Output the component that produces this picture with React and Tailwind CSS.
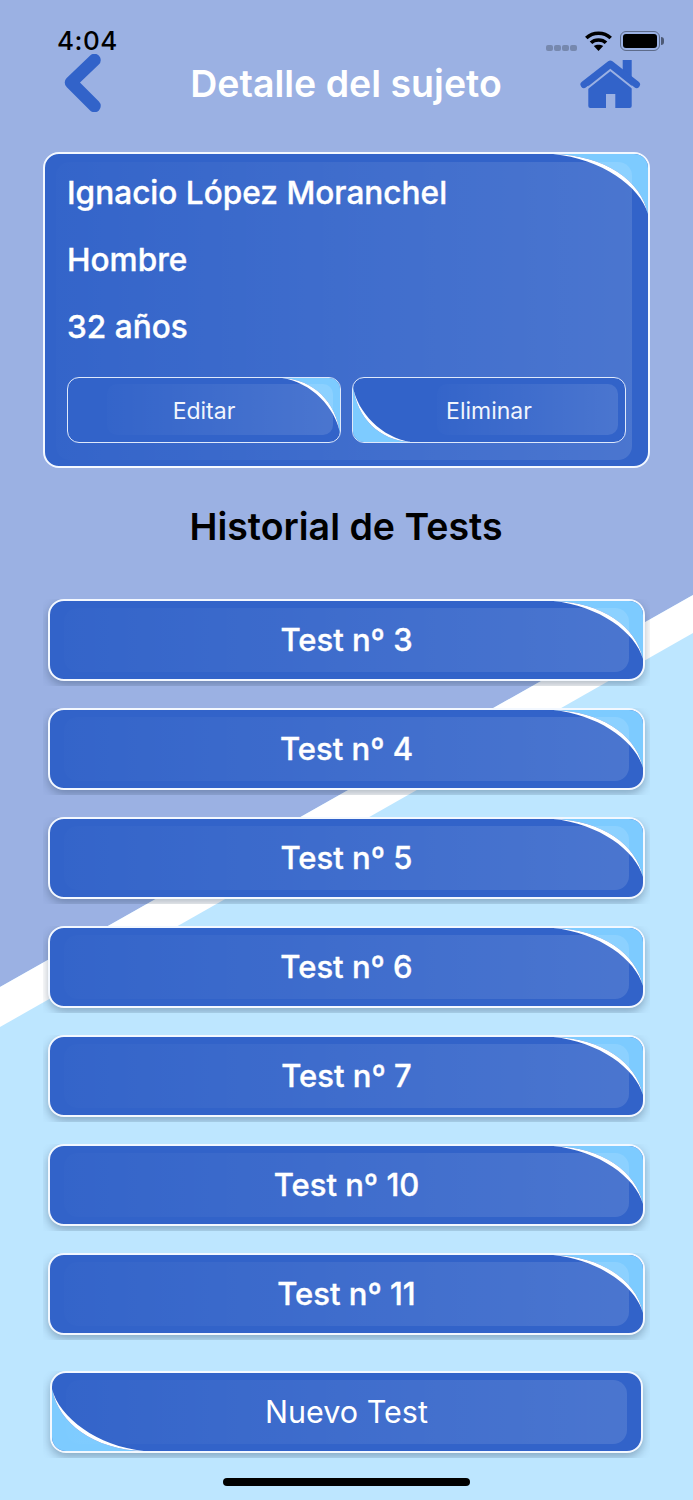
import React from 'react';

const tests = [3, 4, 5, 6, 7, 10, 11];

// curved corner in light blue with the white crescent along its edge
const Corner = ({ className }) => (
  <svg viewBox="0 0 100 100" preserveAspectRatio="none" className={`absolute ${className}`}>
    <path d="M0 0 C55 2 93 45 100 100 L100 0 Z" fill="#7DCBFF" />
    <path d="M0 0 C55 2 93 45 100 100 C92 54 51 8 0 0 Z" fill="#ffffff" />
  </svg>
);

const Glow = ({ className }) => (
  <div className={`absolute bg-gradient-to-r from-white/1 to-white/12 ${className}`} />
);

const TestButton = ({ label, isNew }) => (
  <div className={`w-[607px] h-[87px] mx-auto overflow-hidden ${isNew ? 'px-[7px]' : 'px-[5px]'}`}>
    <button className="relative w-full h-[82px] overflow-hidden rounded-[16px] border-2 border-[#f3f8ff] bg-[#3263C9] shadow-[0_4px_10px_rgba(40,60,90,0.36)]">
      {isNew ? (
        <Corner className="left-0 bottom-0 w-[92px] h-[62px] rotate-180" />
      ) : (
        <Corner className="right-0 top-0 w-[90px] h-[58px]" />
      )}
      <Glow className="left-[14px] right-[14px] top-[7px] bottom-[7px] rounded-[14px]" />
      <span className={`relative text-white ${isNew ? 'text-[30.5px] font-normal' : 'text-[31px] font-medium [-webkit-text-stroke:0.35px_white]'}`}>{label}</span>
    </button>
  </div>
);

const SmallButton = ({ label, flip }) => (
  <button className="relative flex-1 h-[66px] overflow-hidden rounded-[12px] border border-[#dfe9fb] bg-[#3263C9]">
    {flip ? (
      <Corner className="left-0 bottom-0 w-[58px] h-[55px] rotate-180" />
    ) : (
      <Corner className="right-0 top-0 w-[58px] h-[55px]" />
    )}
    <Glow
      className={`top-[6px] bottom-[7px] right-[7px] rounded-[10px] ${flip ? 'left-[84px]' : 'left-[39px]'}`}
    />
    <span className="relative top-[1px] text-[23px] text-[#f1f5fd]">{label}</span>
  </button>
);

const StatusBar = () => (
  <div className="absolute left-0 right-0 top-[25px] h-[32px] z-10 flex items-center pl-[57px] pr-[29px] text-black">
    <span className="text-[26px] leading-[32px] font-medium tracking-[0.5px]">4:04</span>
    <div className="ml-auto flex items-center">
      <div className="flex gap-[1px] mt-[13px]">
        <span className="w-[7px] h-[6px] rounded-[2px] bg-[#7688AE]" />
        <span className="w-[7px] h-[6px] rounded-[2px] bg-[#7688AE]" />
        <span className="w-[7px] h-[6px] rounded-[2px] bg-[#7688AE]" />
        <span className="w-[7px] h-[6px] rounded-[2px] bg-[#7688AE]" />
      </div>
      <svg viewBox="0 0 27 20" className="w-[27px] h-[20px] ml-[8px]" fill="none" stroke="#000" strokeWidth="3.6">
        <path d="M1.3 7 C8 0.6 19 0.6 25.7 7" />
        <path d="M6 11.8 C9.8 8 17.2 8 21 11.8" />
        <path d="M13.5 20 L8.8 15 C11.3 13.2 15.7 13.2 18.2 15 Z" fill="#000" stroke="none" />
      </svg>
      <div className="ml-[8px] flex items-center">
        <div className="w-[40px] h-[20px] rounded-[6px] border-[1.5px] border-[#5d6b8a] p-[2px]">
          <div className="w-full h-full rounded-[3px] bg-black" />
        </div>
        <div className="ml-[1px] w-[3px] h-[8px] rounded-r-[3px] bg-[#4d5a76]" />
      </div>
    </div>
  </div>
);

const App = () => {
  return (
    <div className="relative w-[693px] h-[1500px] overflow-hidden bg-[#BDE6FF] font-[Inter,sans-serif]">
      {/* diagonal background */}
      <svg viewBox="0 0 693 1500" className="absolute inset-0 w-[693px] h-[1500px]">
        <polygon points="0,0 693,0 693,595 0,987" fill="#9BB1E3" />
        <polygon points="0,987 693,595 693,633 0,1027" fill="#ffffff" />
      </svg>

      <StatusBar />

      <div className="relative flex flex-col">
        <header className="mt-[52px] h-[58px] px-[52px] grid grid-cols-[1fr_auto_1fr] items-center">
          <svg viewBox="0 0 38 58" className="w-[38px] h-[58px] ml-[12px]" fill="none" stroke="#3263C9" strokeWidth="12.5" strokeLinecap="round" strokeLinejoin="round">
            <path d="M30.5 6 L7 28.5 L30.5 52" />
          </svg>
          <h1 className="pt-[3px] -ml-[1px] text-[37.5px] font-semibold text-white leading-[58px]">Detalle del sujeto</h1>
          <svg viewBox="0 0 61 48" className="w-[61px] h-[48px] justify-self-end mt-[2px]">
            <path d="M42.7 0 H51.7 V20 H42.7 Z" fill="#3263C9" />
            <path d="M4 24.5 L30.3 4 L56.5 24.5" fill="none" stroke="#3263C9" strokeWidth="7" strokeLinecap="round" strokeLinejoin="round" />
            <path
              d="M8.3 24 L30.3 7 L51.7 24 V46 Q51.7 48 49.7 48 H35.3 V34 H26 V48 H10.3 Q8.3 48 8.3 46 Z"
              fill="#3263C9"
            />
            <path d="M7 28.5 L30.3 10 L53.5 28.5" fill="none" stroke="#9BB1E3" strokeWidth="2" />
          </svg>
        </header>

        <section className="relative mt-[42px] mx-[43px] h-[316px] overflow-hidden rounded-[16px] border-2 border-[#f3f8ff] bg-[#3263C9]">
          <Corner className="right-0 top-0 w-[95px] h-[60px]" />
          <Glow className="left-[11px] right-[16px] top-[8px] bottom-[6px] rounded-[14px]" />
          <div className="relative pt-[5px] pl-[22px] pr-[22px]">
            <p className="text-[31.6px] leading-[67px] font-medium text-white [-webkit-text-stroke:0.35px_white]">Ignacio López Moranchel</p>
            <p className="text-[31.6px] leading-[67px] font-medium text-white [-webkit-text-stroke:0.35px_white]">Hombre</p>
            <p className="text-[31.6px] leading-[67px] font-medium text-white [-webkit-text-stroke:0.35px_white]">32 años</p>
            <div className="mt-[17px] flex gap-[11px]">
              <SmallButton label="Editar" />
              <SmallButton label="Eliminar" flip />
            </div>
          </div>
        </section>

        <h2 className="mt-[31px] h-[56px] -ml-[1px] text-center text-[37.5px] leading-[56px] font-semibold text-black">
          Historial de Tests
        </h2>

        <div className="mt-[44px] flex flex-col gap-[22px]">
          {tests.map((n) => (
            <TestButton key={n} label={`Test nº ${n}`} />
          ))}
        </div>

        <div className="mt-[31px]">
          <TestButton label="Nuevo Test" isNew />
        </div>

        <div className="mt-[20px] mx-auto w-[247px] h-[8px] rounded-full bg-black" />
      </div>
    </div>
  );
};

export default App;
